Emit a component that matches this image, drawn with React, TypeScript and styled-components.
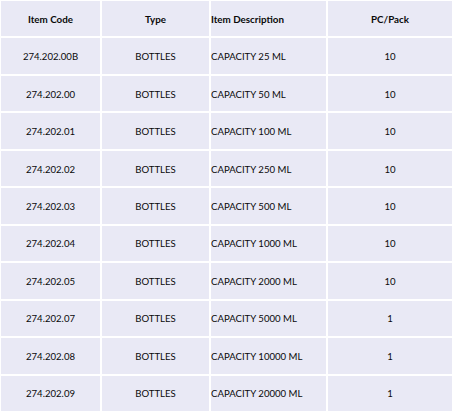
import React from "react";
import styled, { createGlobalStyle } from "styled-components";

const Global = createGlobalStyle`
  html, body { margin: 0; padding: 0; background: #ffffff; }
  body { font-family: Lato, "Open Sans", "Liberation Sans", sans-serif; }
`;

const Table = styled.div`
  box-sizing: border-box;
  width: 453px;
  height: 412px;
  padding: 1px;
  display: grid;
  grid-template-columns: 99px 107px 115px 124px;
  grid-template-rows: repeat(11, 1fr);
  gap: 2px;
  background: #ffffff;
`;

const Cell = styled.div<{ $align: "center" | "left"; $head?: boolean }>`
  background: #e9e9f5;
  display: flex;
  align-items: center;
  justify-content: ${(p) => (p.$align === "center" ? "center" : "flex-start")};
  padding-left: ${(p) => (p.$align === "left" ? "0px" : "0")};
  padding-top: 1px;
  font-size: ${(p) => (p.$head ? "9.8px" : "9.6px")};
  font-weight: ${(p) => (p.$head ? 700 : 400)};
  color: #0a0a0a;
  white-space: nowrap;
`;

const rows: [string, string, string, string][] = [
  ["274.202.00B", "BOTTLES", "CAPACITY 25 ML", "10"],
  ["274.202.00", "BOTTLES", "CAPACITY 50 ML", "10"],
  ["274.202.01", "BOTTLES", "CAPACITY 100 ML", "10"],
  ["274.202.02", "BOTTLES", "CAPACITY 250 ML", "10"],
  ["274.202.03", "BOTTLES", "CAPACITY 500 ML", "10"],
  ["274.202.04", "BOTTLES", "CAPACITY 1000 ML", "10"],
  ["274.202.05", "BOTTLES", "CAPACITY 2000 ML", "10"],
  ["274.202.07", "BOTTLES", "CAPACITY 5000 ML", "1"],
  ["274.202.08", "BOTTLES", "CAPACITY 10000 ML", "1"],
  ["274.202.09", "BOTTLES", "CAPACITY 20000 ML", "1"],
];

const aligns: ("center" | "left")[] = ["center", "center", "left", "center"];
const heads = ["Item Code", "Type", "Item Description", "PC/Pack"];

export default function App() {
  return (
    <>
      <Global />
      <Table>
        {heads.map((h, i) => (
          <Cell key={h} $align={aligns[i]} $head>
            {h}
          </Cell>
        ))}
        {rows.map((r, ri) =>
          r.map((v, ci) => (
            <Cell key={`${ri}-${ci}`} $align={aligns[ci]}>
              {v}
            </Cell>
          ))
        )}
      </Table>
    </>
  );
}
